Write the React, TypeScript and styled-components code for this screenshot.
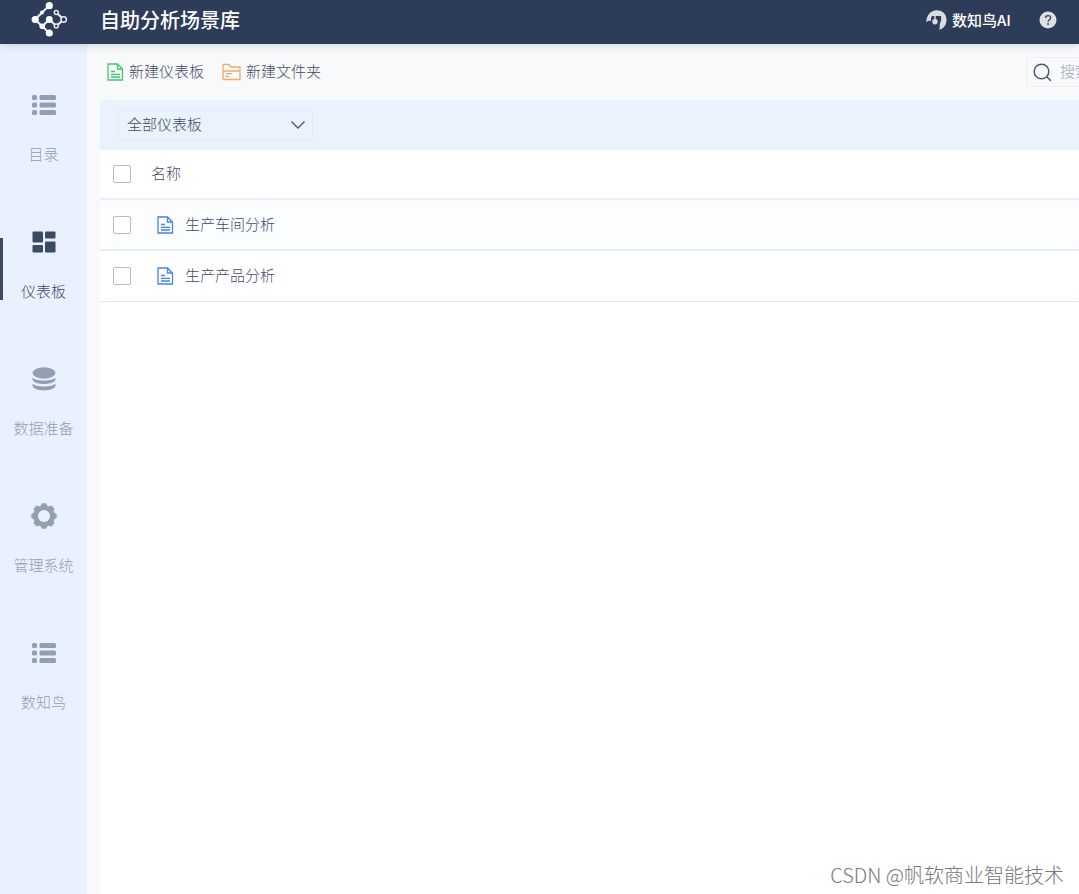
import React from 'react';
import styled, { createGlobalStyle } from 'styled-components';

const GlobalStyle = createGlobalStyle`
  * { box-sizing: border-box; }
  html, body { margin: 0; }
  body {
    font-family: "Liberation Sans", "Noto Sans CJK SC", sans-serif;
    font-size: 15px;
    font-weight: 300;
    line-height: 22px;
    color: #3d4d66;
    background: #f7f9fb;
  }
  button, input, select { font: inherit; color: inherit; }
`;

const Page = styled.div`
  position: relative;
  display: flex;
  flex-direction: column;
  min-height: 100vh;
  overflow: hidden;
`;

const Header = styled.header`
  display: flex;
  align-items: center;
  height: 44px;
  padding: 0 22px 5px 30px;
  font-family: "Noto Sans CJK SC", sans-serif;
  color: #fff;
  background: #2d3c59;
  box-shadow: 0 1px 8px rgba(45, 60, 89, 0.2);
  z-index: 1;
`;

const Title = styled.h1`
  flex: 1;
  margin: 0 0 0 30px;
  font-size: 20px;
  font-weight: 500;
  line-height: 28px;
`;

const HeaderButton = styled.button`
  display: flex;
  align-items: center;
  gap: 5px;
  margin-left: 28px;
  padding: 0;
  border: 0;
  background: none;
  font-weight: 500;
  white-space: nowrap;
`;

const Body = styled.div`
  display: flex;
  flex: 1;
`;

const Sidebar = styled.nav`
  flex: none;
  width: 87px;
  padding-top: 18px;
  background: #eaf1fe;
`;

const NavItem = styled.a<{ $active?: boolean }>`
  position: relative;
  display: flex;
  flex-direction: column;
  align-items: center;
  gap: 27px;
  height: 137px;
  padding-top: 31px;
  text-decoration: none;
  color: ${(p) => (p.$active ? '#3b4b66' : '#929eb2')};

  &::before {
    content: ${(p) => (p.$active ? '""' : 'none')};
    position: absolute;
    left: 0;
    top: 39px;
    width: 3px;
    height: 62px;
    background: #3b4b66;
  }
`;

const Main = styled.main`
  display: flex;
  flex: 1;
  flex-direction: column;
  min-width: 0;
  padding-left: 13px;
`;

const Toolbar = styled.div`
  display: flex;
  align-items: center;
  gap: 18px;
  height: 56px;
  padding-left: 7px;
`;

const ToolButton = styled.button`
  display: flex;
  align-items: center;
  gap: 5px;
  padding: 0;
  border: 0;
  background: none;
`;

const Search = styled.label`
  display: flex;
  align-items: center;
  gap: 8px;
  width: 53px;
  height: 30px;
  margin-left: auto;
  padding-left: 6px;
  border: 1px solid #eceef2;
  border-right: 0;
  border-radius: 2px 0 0 2px;

  svg { flex: none; }
`;

const SearchInput = styled.input`
  flex: 1;
  min-width: 0;
  padding: 0;
  border: 0;
  outline: 0;
  background: none;

  &::placeholder { color: #9ba5b5; opacity: 1; }
`;

const FilterBar = styled.div`
  display: flex;
  align-items: center;
  height: 50px;
  padding-left: 18px;
  background: #eaf2fe;
`;

const SelectBox = styled.div`
  display: grid;
  align-items: center;
  width: 195px;

  > * { grid-area: 1 / 1; }
  > svg { justify-self: end; margin-right: 7px; pointer-events: none; }
`;

const Select = styled.select`
  width: 100%;
  height: 30px;
  padding: 0 30px 0 8px;
  border: 1px solid #e4eaf4;
  border-radius: 2px;
  outline: 0;
  background: none;
  appearance: none;
`;

const Panel = styled.section`
  flex: 1;
  background: #fff;
`;

const Table = styled.table`
  width: 100%;
  border-spacing: 0;
  text-align: left;

  th, td {
    font-weight: 300;
    border-bottom: 2px solid #e6f0fd;
  }
  tbody tr:last-child td { border-bottom: 1px solid #dbe7f8; }
`;

const Row = styled.tr<{ $tinted?: boolean }>`
  background: ${(p) => (p.$tinted ? '#fbfdff' : '#fff')};
`;

const HeadCell = styled.th`
  height: 50px;
  padding: 0;
`;

const CheckHead = styled.th`
  width: 51px;
  padding: 0 0 0 13px;
`;

const CheckCell = styled.td`
  padding: 0 0 0 13px;
`;

const NameCell = styled.td`
  height: 51px;
  padding: 0 0 0 6px;
`;

const Checkbox = styled.input`
  display: block;
  width: 18px;
  height: 18px;
  margin: 0;
  border: 1px solid #b5bcc9;
  border-radius: 2px;
  background: #fff;
  appearance: none;

  &:checked { background: #3685f2; }
`;

const FileLink = styled.a`
  display: flex;
  align-items: center;
  gap: 11px;
  color: inherit;
  text-decoration: none;
`;

const Watermark = styled.div`
  position: absolute;
  right: 15px;
  bottom: 6px;
  font-family: "Noto Sans CJK SC", sans-serif;
  font-size: 20px;
  line-height: 26px;
  color: #77797c;
`;

const Logo = () => (
  <svg width="40" height="36" viewBox="0 0 40 36" fill="#fff" stroke="#e6e9ee" strokeWidth="2.200">
    <path d="M19.300 3.500 5 17.500l14.300 13.500M19.300 17.500l-7.300 7M19.300 17.500l7 6.500 7.400-6.500-7.400-7" fill="none" />
    <g stroke="none">
      <circle cx="19.300" cy="3.700" r="3.600" />
      <circle cx="5.200" cy="17.500" r="3.600" />
      <circle cx="19.300" cy="17.500" r="3.400" />
      <circle cx="19.300" cy="31" r="3.600" />
      <circle cx="12" cy="10.500" r="2" />
      <circle cx="12.200" cy="24.200" r="2.800" />
    </g>
    <g fill="#2d3c59" strokeWidth="1.500">
      <circle cx="26.300" cy="10.500" r="2" />
      <circle cx="33.700" cy="17.500" r="2.700" />
      <circle cx="26.300" cy="24" r="2" />
    </g>
  </svg>
);

const BirdIcon = () => (
  <svg width="21" height="20" viewBox="0 0 21 20" fill="#d9dce2">
    <path d="M0.300 12.500C0.300 5.500 4.500 0.300 10.800 0.300c5.700 0 9.700 4 9.700 9.400 0 5.200-2.800 8.800-7.300 10.100 0.600-2 0.600-3.600 0.600-5.800 1.200-2.500 1.700-5 1.200-8H5.800c-0.800 1.800-0.800 3.300-0.800 5-2-0.800-3.700-0.200-4.700 1.500Z" />
    <path d="M8.300 5h1.400v4a2.800 2.800 0 1 1-1.400 0Z" />
  </svg>
);

const HelpIcon = () => (
  <svg width="18" height="18" viewBox="0 0 18 18">
    <circle cx="9" cy="9" r="8.500" fill="#dcdfe4" />
    <path d="M6.500 7C6.500 3.700 11.700 3.800 11.600 6.800 11.600 8.600 9.100 8.700 9.100 10.800" fill="none" stroke="#2d3c59" strokeWidth="1.300" />
    <circle cx="9.100" cy="13" r="0.900" fill="#2d3c59" />
  </svg>
);

const ListIcon = () => (
  <svg width="24" height="24" viewBox="0 0 24 24" fill="currentColor">
    {[2, 9.500, 17].map((y) => (
      <g key={y}>
        <rect x="0" y={y} width="5" height="5" rx="1.500" />
        <rect x="7.500" y={y} width="16.500" height="5" rx="1.500" />
      </g>
    ))}
  </svg>
);

const DashboardIcon = () => (
  <svg width="24" height="24" viewBox="0 0 24 24" fill="currentColor">
    <rect x="0.500" y="1.500" width="10.500" height="11" rx="1" />
    <rect x="13" y="1.500" width="10.500" height="7" rx="1" />
    <rect x="0.500" y="15" width="10.500" height="7.500" rx="1" />
    <rect x="13" y="11.500" width="10.500" height="11" rx="1" />
  </svg>
);

const DatabaseIcon = () => (
  <svg width="24" height="24" viewBox="0 0 24 24" fill="currentColor">
    <ellipse cx="12" cy="6" rx="11.500" ry="5.700" />
    <path d="M0.500 10.500C3 14.500 21 14.500 23.500 10.500v2c-1 6-22 6-23 0ZM0.500 16.500C3 20.500 21 20.500 23.500 16.500v2c-1 6.500-22 6.500-23 0Z" />
  </svg>
);

const GearIcon = () => (
  <svg width="26" height="24" viewBox="0 1 26 24" overflow="visible">
    <g fill="currentColor">
      {[0, 45, 90, 135].map((a) => (
        <rect key={a} x="10" y="0.300" width="6" height="25.400" rx="2" transform={`rotate(${a} 13 13)`} />
      ))}
      <circle cx="13" cy="13" r="10.800" />
    </g>
    <circle cx="13" cy="13" r="6" fill="#eaf1fe" />
  </svg>
);

const DocIcon = ({ color }: { color: string }) => (
  <svg width="17" height="18" viewBox="0 0 17 18" fill="none" stroke={color} strokeWidth="1.300">
    <path d="M1 1h9.500l5 5v11H1ZM10.500 1v5h5M4 8.500h4M4 11.300h9M4 14h9" />
  </svg>
);

const FolderIcon = () => (
  <svg width="19" height="18" viewBox="0 0 19 18" fill="none" stroke="#f2ab66" strokeWidth="1.300">
    <path d="M1 16V1.500h6l2 2.500h9v12.500H1ZM1 8h17M4 10.700h6M4 13.300h3" />
  </svg>
);

const SearchIcon = () => (
  <svg width="19" height="19" viewBox="0 0 19 19" fill="none" stroke="#4a586f" strokeWidth="1.500">
    <circle cx="8.500" cy="8.500" r="7.300" />
    <path d="m13.500 13.500 4.300 4.300" />
  </svg>
);

const ChevronIcon = () => (
  <svg width="16" height="10" viewBox="0 0 16 10" fill="none" stroke="#4a586f" strokeWidth="1.400">
    <path d="m1.500 1.500 6.500 6.500 6.500-6.500" />
  </svg>
);

const navItems = [
  { label: '目录', Icon: ListIcon },
  { label: '仪表板', Icon: DashboardIcon, active: true },
  { label: '数据准备', Icon: DatabaseIcon },
  { label: '管理系统', Icon: GearIcon },
  { label: '数知鸟', Icon: ListIcon },
];

const files = ['生产车间分析', '生产产品分析'];

export default function App() {
  return (
    <Page>
      <GlobalStyle />
      <Header>
        <Logo />
        <Title>自助分析场景库</Title>
        <HeaderButton><BirdIcon />数知鸟AI</HeaderButton>
        <HeaderButton aria-label="帮助"><HelpIcon /></HeaderButton>
      </Header>
      <Body>
        <Sidebar>
          {navItems.map(({ label, Icon, active }) => (
            <NavItem key={label} href="#" $active={active}>
              <Icon />
              <span>{label}</span>
            </NavItem>
          ))}
        </Sidebar>
        <Main>
          <Toolbar>
            <ToolButton><DocIcon color="#3dc86e" />新建仪表板</ToolButton>
            <ToolButton><FolderIcon />新建文件夹</ToolButton>
            <Search>
              <SearchIcon />
              <SearchInput type="text" placeholder="搜索" aria-label="搜索" />
            </Search>
          </Toolbar>
          <FilterBar>
            <SelectBox>
              <Select aria-label="仪表板范围">
                <option>全部仪表板</option>
              </Select>
              <ChevronIcon />
            </SelectBox>
          </FilterBar>
          <Panel>
            <Table>
              <thead>
                <Row>
                  <CheckHead><Checkbox type="checkbox" aria-label="全选" /></CheckHead>
                  <HeadCell>名称</HeadCell>
                </Row>
              </thead>
              <tbody>
                {files.map((name, i) => (
                  <Row key={name} $tinted={i % 2 === 0}>
                    <CheckCell><Checkbox type="checkbox" aria-label={name} /></CheckCell>
                    <NameCell><FileLink href="#"><DocIcon color="#4583f0" />{name}</FileLink></NameCell>
                  </Row>
                ))}
              </tbody>
            </Table>
          </Panel>
        </Main>
      </Body>
      <Watermark>CSDN @帆软商业智能技术</Watermark>
    </Page>
  );
}
